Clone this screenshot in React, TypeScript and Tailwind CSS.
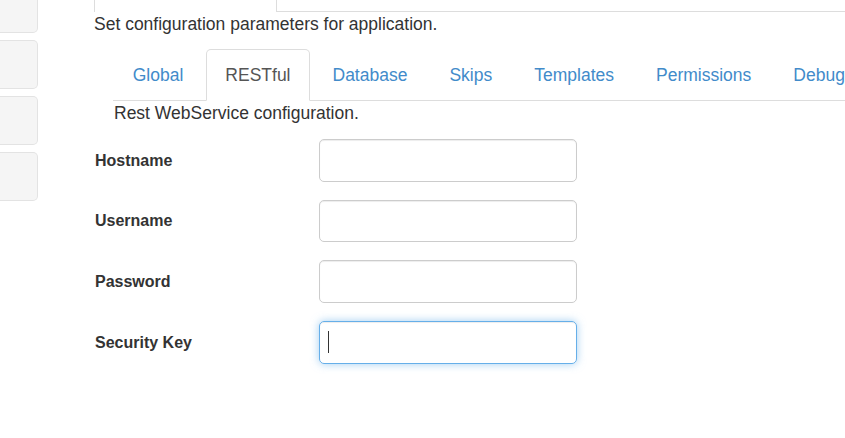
import React from "react";

const tabs = ["Global", "RESTful", "Database", "Skips", "Templates", "Permissions", "Debug"];
const fields = ["Hostname", "Username", "Password", "Security Key"];

function SideBox({ className = "" }: { className?: string }) {
  return <div className={`h-[49px] bg-[#f5f5f5] border border-l-0 border-[#e3e3e3] rounded-r-[5px] ${className}`} />;
}

export default function App() {
  return (
    <div
      className="flex w-[845px] h-[438px] overflow-hidden bg-white text-[#333] text-[17.5px] leading-[25px]"
      style={{ fontFamily: '"Liberation Sans", Arial, sans-serif' }}
    >
      {/* left nav stubs */}
      <div className="w-[38px] shrink-0 flex flex-col gap-[7px] -mt-[16px]">
        <SideBox />
        <SideBox />
        <SideBox />
        <SideBox />
      </div>

      <div className="ml-[56px] flex-1 min-w-0">
        {/* outer tabs (mostly scrolled off) */}
        <div className="flex h-[12px]">
          <div className="w-[183px] border-x border-[#ddd]" />
          <div className="flex-1 border-b border-[#ddd]" />
        </div>

        <p className="mb-[12px]">Set configuration parameters for application.</p>

        <div className="pl-[19px]">
          <ul className="flex border-b border-[#ddd] whitespace-nowrap">
            {tabs.map((t) => {
              const active = t === "RESTful";
              return (
                <li key={t} className="-mb-px mr-[2.5px]">
                  <a
                    className={`block px-[18.75px] py-[12.5px] border rounded-t-[5px] ${
                      active
                        ? "bg-white border-[#ddd] border-b-transparent text-[#555]"
                        : "border-transparent text-[#428bca]"
                    }`}
                  >
                    {t}
                  </a>
                </li>
              );
            })}
          </ul>
          <p className="pl-px">Rest WebService configuration.</p>
        </div>

        <form className="mt-[13px] pl-px">
          {fields.map((f, i) => {
            const focused = i === fields.length - 1;
            return (
              <div key={f} className="flex items-center mb-[18.2px]">
                <label className="w-[224px] font-bold text-[16px]">{f}</label>
                <div className="relative">
                  <input
                    type="text"
                    className={`block w-[258px] h-[42.5px] px-[8px] rounded-[5px] border outline-none ${
                      focused
                        ? "border-[#66afe9] shadow-[inset_0_1px_1px_rgba(0,0,0,0.075),0_0_8px_rgba(102,175,233,0.6)]"
                        : "border-[#ccc] shadow-[inset_0_1px_1px_rgba(0,0,0,0.075)]"
                    }`}
                  />
                  {focused && <span className="absolute left-[9px] top-[10px] w-px h-[22px] bg-[#333]" />}
                </div>
              </div>
            );
          })}
        </form>
      </div>
    </div>
  );
}
